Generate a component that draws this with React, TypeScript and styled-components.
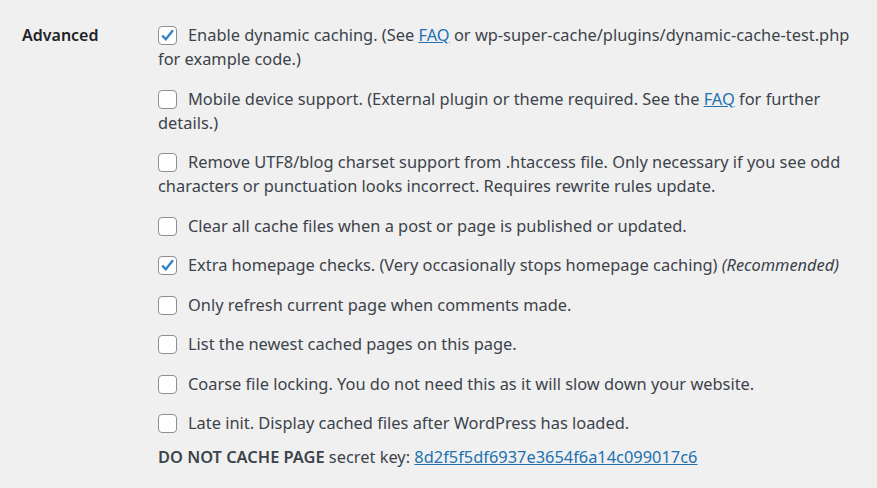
import styled, { createGlobalStyle } from "styled-components";

const GlobalStyle = createGlobalStyle`
    body {
        margin: 0;
        background: #f0f0f1;
        font-family: "Noto Sans", "Open Sans", sans-serif;
        color: #3c434a;
    }
`;

const Page = styled.div`
    display: flex;
    padding: 23px 11px 0 22px;
    width: 877px;
    box-sizing: border-box;
`;

const Label = styled.div`
    width: 136px;
    flex-shrink: 0;
    font-size: 16px;
    line-height: 24px;
    font-weight: 600;
    color: #1d2327;
`;

const Options = styled.div`
    flex: 1;
    display: flex;
    flex-direction: column;
    gap: 15.5px;
    font-size: 16.4px;
    line-height: 24px;
`;

const Option = styled.label`
    display: block;
`;

const Box = styled.span<{ $checked?: boolean }>`
    display: inline-block;
    vertical-align: -4px;
    width: 17px;
    height: 17px;
    margin-right: 11px;
    border: 1px solid #8c8f94;
    border-radius: 4px;
    background: #fff;
    box-sizing: content-box;
    svg {
        display: ${(p) => (p.$checked ? "block" : "none")};
    }
`;

const Link = styled.a`
    color: #2271b1;
    text-decoration: underline;
`;

const Note = styled.em`
    font-style: italic;
`;

const KeyLine = styled.div`
    margin-top: -6px;
`;

const Strong = styled.strong`
    font-weight: 600;
`;

function Check({ checked }: { checked?: boolean }) {
    return (
        <Box $checked={checked}>
            <svg width="17" height="17" viewBox="0 0 17 17">
                <path d="M3.2 8.6l3.6 3.7 7.2-9.1" fill="none" stroke="#3582c4" strokeWidth="2.4" strokeLinejoin="miter" />
            </svg>
        </Box>
    );
}

export default function App() {
    return (
        <>
            <GlobalStyle />
            <Page>
                <Label>Advanced</Label>
                <Options>
                    <Option>
                        <Check checked />
                        Enable dynamic caching. (See <Link href="#">FAQ</Link> or wp-super-cache/plugins/dynamic-cache-test.php for example code.)
                    </Option>
                    <Option>
                        <Check />
                        Mobile device support. (External plugin or theme required. See the <Link href="#">FAQ</Link> for further details.)
                    </Option>
                    <Option>
                        <Check />
                        Remove UTF8/blog charset support from .htaccess file. Only necessary if you see odd characters or punctuation looks incorrect. Requires rewrite rules update.
                    </Option>
                    <Option>
                        <Check />
                        Clear all cache files when a post or page is published or updated.
                    </Option>
                    <Option>
                        <Check checked />
                        Extra homepage checks. (Very occasionally stops homepage caching) <Note>(Recommended)</Note>
                    </Option>
                    <Option>
                        <Check />
                        Only refresh current page when comments made.
                    </Option>
                    <Option>
                        <Check />
                        List the newest cached pages on this page.
                    </Option>
                    <Option>
                        <Check />
                        Coarse file locking. You do not need this as it will slow down your website.
                    </Option>
                    <Option>
                        <Check />
                        Late init. Display cached files after WordPress has loaded.
                    </Option>
                    <KeyLine>
                        <Strong>DO NOT CACHE PAGE</Strong> secret key: <Link href="#">8d2f5f5df6937e3654f6a14c099017c6</Link>
                    </KeyLine>
                </Options>
            </Page>
        </>
    );
}
